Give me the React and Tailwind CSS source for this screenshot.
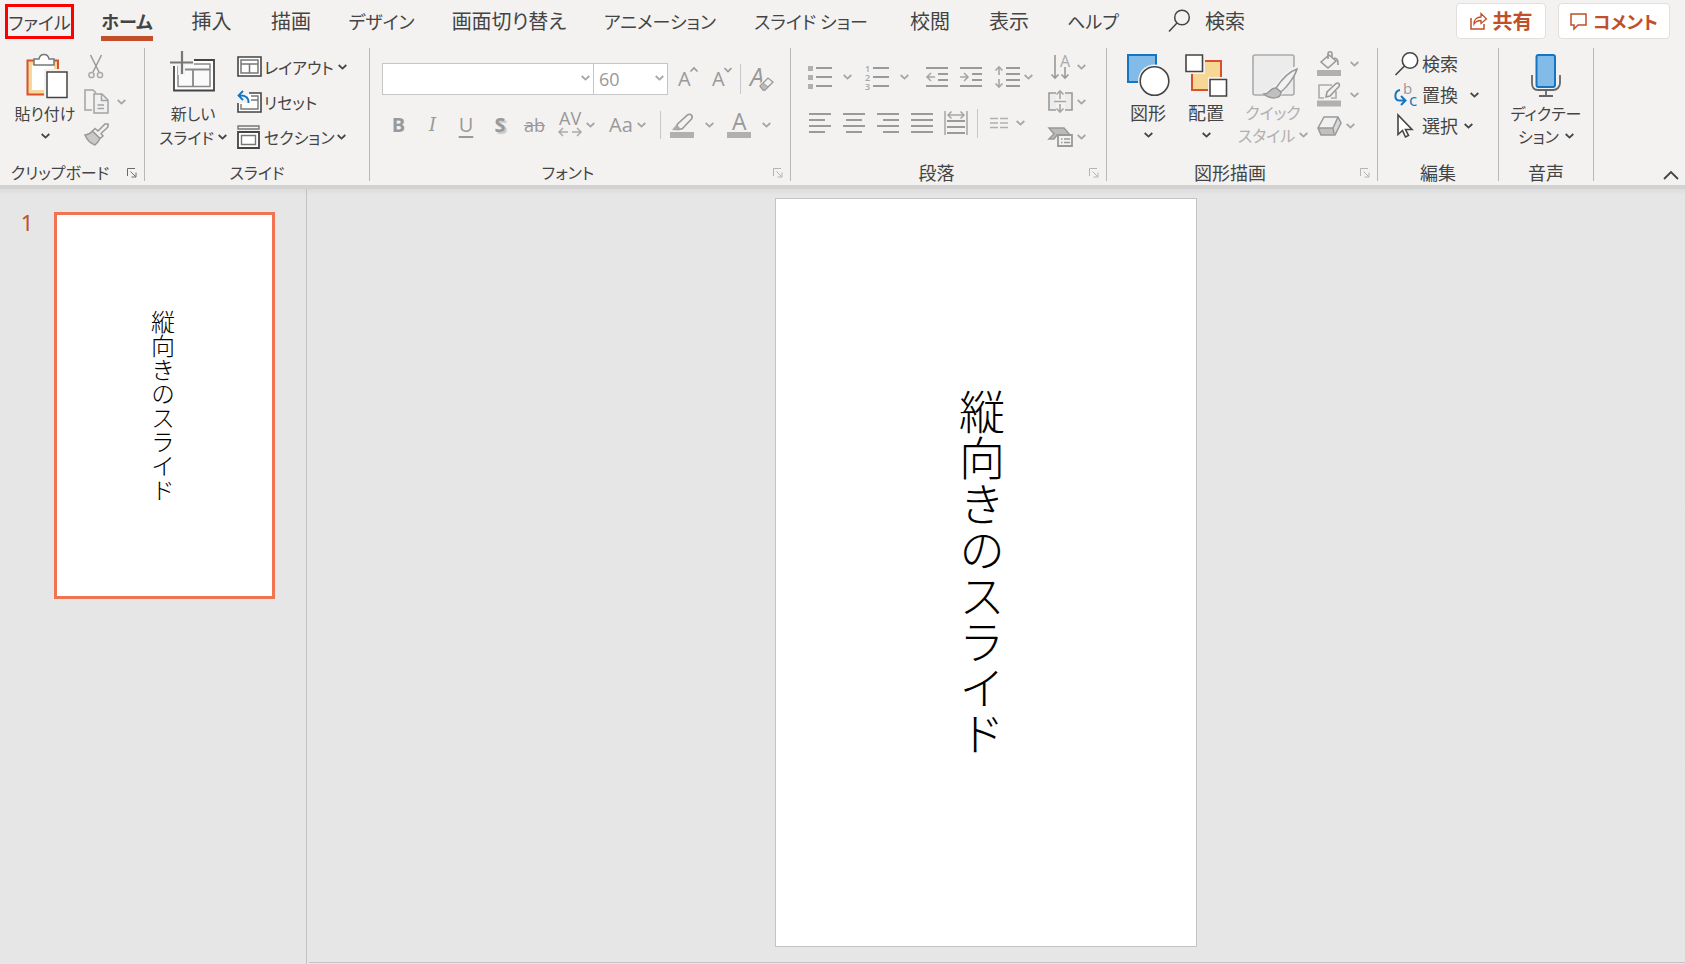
import { useState } from 'react';
import clsx from 'clsx';

const tabs = [
  { name: 'ホーム', width: 'w-[90px]' },
  { name: '挿入', width: 'w-[79px]' },
  { name: '描画', width: 'w-[80px]' },
  { name: 'デザイン', width: 'w-[101px]' },
  { name: '画面切り替え', width: 'w-[154px]' },
  { name: 'アニメーション', width: 'w-[148px]' },
  { name: 'スライド ショー', width: 'w-[154px]' },
  { name: '校閲', width: 'w-[84px]' },
  { name: '表示', width: 'w-[74px]' },
  { name: 'ヘルプ', width: 'w-[94px]' },
];

function Chevron({ dim }) {
  return (
    <svg width="9" height="6" viewBox="0 0 9 6" fill="none" strokeWidth="1.8" className={clsx('shrink-0', dim ? 'stroke-[#a6a6a6]' : 'stroke-[#444444]')}>
      <path d="M.700 1 4.500 4.600 8.300 1" />
    </svg>
  );
}

function Svg({ w, h, children }) {
  return (
    <svg width={w} height={h} viewBox={`0 0 ${w} ${h}`} fill="none" className="shrink-0 overflow-visible">
      {children}
    </svg>
  );
}

function Group({ label, width, launcher, dimLauncher, children }) {
  return (
    <section aria-label={label} className={clsx('flex h-[133px] shrink-0 flex-col border-r border-[#b8b8b8]', width)}>
      <div className="flex flex-1 items-start">{children}</div>
      <div className="flex h-[18px] items-center">
        <span className={clsx('flex-1 text-center leading-[18px]', /^[ァ-ー]+$/.test(label) ? 'text-base' : 'text-lg')}>{label}</span>
        {launcher && (
          <button type="button" aria-label={`${label}の設定`} className="flex w-6 justify-center pt-0.5">
            <svg width="10" height="10" viewBox="0 0 10 10" fill="none" className={dimLauncher ? 'stroke-[#b4b4b4]' : 'stroke-[#6a6a6a]'}>
              <path d="M.5 8V.5H8M3.5 3.5l5 5M9 4.5V9H4.5" />
            </svg>
          </button>
        )}
      </div>
    </section>
  );
}

function Tool({ label, className, children }) {
  return (
    <button type="button" aria-label={label} className={clsx('flex shrink-0 items-center', className)}>
      {children}
    </button>
  );
}

function Lines({ rows }) {
  return (
    <Svg w={22} h={22}>
      {rows.map(([from, to], i) => (
        <path key={i} d={`M${from} ${2 + i * 6}H${to}`} stroke="#9a9a9a" strokeWidth="2" />
      ))}
    </Svg>
  );
}

function ClipboardGroup() {
  return (
    <Group label="クリップボード" width="w-[145px]" launcher>
      <button type="button" className="flex w-[84px] flex-col items-center pt-[5px] pl-1.5 text-base leading-6 whitespace-nowrap">
        <Svg w={44} h={46}>
          <g transform="translate(2 0)">
            <path d="M2.500 7.500H33V41.500H2.500Z" fill="#f8d79a" stroke="#d8512d" strokeWidth="2" />
            <path d="M7 12H29V37H7Z" fill="#fff" />
            <path d="M9 12V6h5c1-6 9-6 10 0h5v6Z" fill="#fff" stroke="#777" strokeWidth="1.500" />
            <path d="M19 16H44V46H19Z" fill="#f3f2f1" />
            <path d="M22 19H42V44.500H22Z" fill="#fff" stroke="#444" strokeWidth="1.500" />
          </g>
        </Svg>
        <span className="mt-0.5">貼り付け</span>
        <span className="flex h-[22px] items-center"><Chevron /></span>
      </button>
      <div className="flex flex-col pt-px">
        <Tool label="切り取り" className="h-[35px] pl-1">
          <Svg w={16} h={24}>
            <path d="M2.500 0 11 17M13.500 0 5 17" stroke="#999" strokeWidth="1.500" />
            <circle cx="3.500" cy="20" r="2.600" stroke="#aaa" strokeWidth="1.500" />
            <circle cx="12" cy="20" r="2.600" stroke="#aaa" strokeWidth="1.500" />
          </Svg>
        </Tool>
        <Tool label="コピー" className="h-[35px] gap-2">
          <Svg w={25} h={25}>
            <path d="M8 21H1V1H9l3 3" stroke="#a3a3a3" strokeWidth="1.500" />
            <path d="M10 5h8l6 6v13H10Z" fill="#f0f0f0" stroke="#a3a3a3" strokeWidth="1.500" />
            <path d="M17.500 5v6.500H24M13.500 16H20M13.500 19.500H20" stroke="#a3a3a3" strokeWidth="1.500" />
          </Svg>
          <Chevron dim />
        </Tool>
        <Tool label="書式のコピー" className="h-[30px]">
          <Svg w={25} h={23}>
            <path d="M1 12C5 12 7 9.500 8.500 8L16 15C15 18 13 20.500 11 22 7 20.500 3 17 1 12Z" fill="#c9c9c9" stroke="#999" strokeWidth="1.500" />
            <path d="M8.500 8 11 5.500l3 2.500L21 1l3 0v3L17 10.500l2 2.500-3 2.500Z" fill="#f0f0f0" stroke="#999" strokeWidth="1.500" />
          </Svg>
        </Tool>
      </div>
    </Group>
  );
}

function SlidesGroup() {
  return (
    <Group label="スライド" width="w-[225px]">
      <button type="button" className="flex w-[92px] flex-col items-center pt-[3px] pl-1 text-base whitespace-nowrap">
        <Svg w={46} h={42}>
          <path d="M4 9H44V39.500H4Z" fill="#fff" stroke="#444" strokeWidth="1.800" />
          <path d="M8 13H40V35.500H8Z" fill="#fafafa" stroke="#888" strokeWidth="1.500" />
          <path d="M8 18.500H40M23 18.500V35.500" stroke="#888" strokeWidth="1.800" />
          <path d="M0 5H24V14H15V24H8V15H0Z" fill="#f3f2f1" />
          <path d="M12 0V23M0 11.500H23" stroke="#777" strokeWidth="2.200" />
        </Svg>
        <span className="mt-2 leading-6">新しい</span>
        <span className="flex items-center gap-1 leading-6">スライド<Chevron /></span>
      </button>
      <div className="flex flex-col pt-px text-base">
        <button type="button" className="flex h-[35px] items-center gap-0.5 whitespace-nowrap">
          <Svg w={25} h={21}>
            <path d="M1 1H24V20H1Z" fill="#fff" stroke="#444" strokeWidth="1.600" />
            <path d="M4 4H21V17H4ZM4 8H21M12.500 8V17" stroke="#777" strokeWidth="1.500" />
          </Svg>
          レイアウト<span className="pl-0.5"><Chevron /></span>
        </button>
        <button type="button" className="flex h-[35px] items-center gap-0.5 whitespace-nowrap">
          <Svg w={25} h={22}>
            <path d="M1 12V21H24V2H12" fill="#fff" stroke="#444" strokeWidth="1.600" />
            <path d="M4 13v5H21V5H14M14 9h7" stroke="#777" strokeWidth="1.400" />
            <path d="M0 0H11V12H0Z" fill="#f3f2f1" />
            <path d="M6 0 1.500 4.500 6 9M2 4.500C9 4 12 7 11.500 12" stroke="#1675c0" strokeWidth="1.800" />
          </Svg>
          リセット
        </button>
        <button type="button" className="flex h-[35px] items-center gap-0.5 whitespace-nowrap">
          <Svg w={25} h={24}>
            <path d="M1 1H22V4H1Z" stroke="#777" strokeWidth="1.400" />
            <path d="M1 7H22V23H1Z" fill="#fff" stroke="#444" strokeWidth="1.800" />
            <path d="M4.500 10.500H18.500V19.500H4.500Z" stroke="#777" strokeWidth="1.400" />
          </Svg>
          セクション<Chevron />
        </button>
      </div>
    </Group>
  );
}

function FontGroup() {
  return (
    <Group label="フォント" width="w-[421px]" launcher dimLauncher>
      <div className="flex flex-col gap-4 pt-[15px] pl-3 font-['Open_Sans','Noto_Sans',sans-serif] text-[#999999]">
        <div className="flex h-8 items-center">
          <label className="relative flex">
            <select aria-label="フォント名" defaultValue="" className="h-8 w-[212px] appearance-none border border-[#c6c6c6] bg-white">
              <option value=""></option>
            </select>
            <span className="pointer-events-none absolute top-3 right-1"><Chevron dim /></span>
          </label>
          <label className="relative -ml-px flex">
            <select aria-label="フォント サイズ" defaultValue="60" className="h-8 w-[75px] appearance-none border border-[#c6c6c6] bg-white pl-[5px] text-lg leading-7">
              <option>60</option>
            </select>
            <span className="pointer-events-none absolute top-3 right-1"><Chevron dim /></span>
          </label>
          <Tool label="フォント サイズの拡大" className="ml-1.5 w-[34px] pl-1">
            <Svg w={20} h={24}>
              <text x="0" y="19" fontSize="20" fill="#999">A</text>
              <path d="M12.500 4.500 16 1 19.500 4.500" stroke="#999" strokeWidth="1.600" />
            </Svg>
          </Tool>
          <Tool label="フォント サイズの縮小" className="w-[32px] pl-1">
            <Svg w={20} h={24}>
              <text x="0" y="19" fontSize="20" fill="#999">A</text>
              <path d="M12.500 1 16 4.500 19.500 1" stroke="#999" strokeWidth="1.600" />
            </Svg>
          </Tool>
          <span className="h-[30px] w-px bg-[#c8c8c8]" />
          <Tool label="書式のクリア" className="pl-[9px]">
            <Svg w={24} h={26}>
              <text x="0" y="20" fontSize="25" fontStyle="italic" fill="#999">A</text>
              <path d="m10 20 7-8h4l3 3-8 9h-4Z" fill="#f3f2f1" stroke="#f3f2f1" strokeWidth="3" />
              <path d="m10 20 8-8 5 4-8 8h-2Z" fill="#f3f2f1" stroke="#999" strokeWidth="1.300" />
              <path d="m10 20 3-3 5 4-3 3h-2Z" fill="#bbb" stroke="#999" />
            </Svg>
          </Tool>
        </div>
        <div className="flex h-7 items-center text-xl leading-7">
          <Tool label="太字" className="w-[33px] justify-center font-bold">B</Tool>
          <Tool label="斜体" className="w-[35px] justify-center font-['DejaVu_Serif','Noto_Sans',serif] text-lg italic">I</Tool>
          <Tool label="下線" className="w-[32px] justify-center underline underline-offset-4">U</Tool>
          <Tool label="文字の影" className="w-[36px] justify-center font-bold [text-shadow:2px_2px_1px_#c8c8c8]">S</Tool>
          <Tool label="取り消し線" className="w-[33px] justify-center text-lg line-through">ab</Tool>
          <Tool label="文字の間隔" className="w-[52px] gap-1 pl-[7px]">
            <Svg w={24} h={26}>
              <text x="1" y="13" fontSize="18" fill="#999">AV</text>
              <path d="M10 20H1M5 16 1 20l4 4M14 20h9M19 16l4 4-4 4" stroke="#aaa" strokeWidth="1.500" />
            </Svg>
            <Chevron dim />
          </Tool>
          <Tool label="文字種の変換" className="w-[57px] gap-1 pl-1.5">Aa<Chevron dim /></Tool>
          <span className="h-[28px] w-px bg-[#c8c8c8]" />
          <Tool label="蛍光ペンの色" className="w-[57px] gap-[10px] pl-[9px]">
            <Svg w={25} h={25}>
              <path d="M7.500 11 17.500 2c3-2 6 1 4 4L12 16H9L7 14Z" stroke="#999" strokeWidth="1.600" />
              <path d="M2 17 6.500 11.500 11 16l-2 1.500Z" fill="#aaa" />
              <path d="M0 19H24V25H0Z" fill="#b0b0b0" />
            </Svg>
            <Chevron dim />
          </Tool>
          <Tool label="フォントの色" className="w-[57px] gap-[10px] pl-[9px]">
            <Svg w={25} h={25}>
              <text x="5" y="17" fontSize="23" fill="#999">A</text>
              <path d="M0 19H24V25H0Z" fill="#b0b0b0" />
            </Svg>
            <Chevron dim />
          </Tool>
        </div>
      </div>
    </Group>
  );
}

function ParagraphGroup() {
  return (
    <Group label="段落" width="w-[316px]" launcher dimLauncher>
      <div className="flex w-[257px] flex-col gap-[14px] pt-[15px] pl-[17px]">
        <div className="flex h-7 items-center">
          <Tool label="箇条書き" className="w-[57px] gap-[11px]">
            <Svg w={24} h={24}>
              <path d="M0 1H5V6H0ZM0 10H5V15H0ZM0 19H5V24H0Z" fill="#b0b0b0" />
              <path d="M8 3H24M8 12H24M8 21H24" stroke="#9a9a9a" strokeWidth="2" />
            </Svg>
            <Chevron dim />
          </Tool>
          <Tool label="段落番号" className="w-[60px] gap-[11px]">
            <Svg w={24} h={24}>
              <g fill="#a6a6a6" fontSize="9" fontWeight="600" fontFamily="Open Sans">
                <text x="0" y="7">1</text>
                <text x="0" y="16">2</text>
                <text x="0" y="25">3</text>
              </g>
              <path d="M8 3H24M8 12H24M8 21H24" stroke="#9a9a9a" strokeWidth="2" />
            </Svg>
            <Chevron dim />
          </Tool>
          <Tool label="インデントを減らす" className="w-[34px]">
            <Svg w={24} h={24}>
              <path d="M1 3H23M13 9H23M13 15H23M1 21H23" stroke="#9a9a9a" strokeWidth="2" />
              <path d="M10 12H2M6 8 2 12l4 4" stroke="#a6a6a6" strokeWidth="1.600" />
            </Svg>
          </Tool>
          <Tool label="インデントを増やす" className="w-[36px]">
            <Svg w={24} h={24}>
              <path d="M1 3H23M13 9H23M13 15H23M1 21H23" stroke="#9a9a9a" strokeWidth="2" />
              <path d="M1 12H9M5 8l4 4-4 4" stroke="#a6a6a6" strokeWidth="1.600" />
            </Svg>
          </Tool>
          <Tool label="行間" className="gap-1">
            <Svg w={25} h={24}>
              <path d="M11 3H25M11 9H25M11 15H25M11 21H25" stroke="#9a9a9a" strokeWidth="2" />
              <path d="M4 10V2M.500 5.500 4 2l3.500 3.500M4 14v8M.500 18.500 4 22l3.500-3.500" stroke="#a6a6a6" strokeWidth="1.600" />
            </Svg>
            <Chevron dim />
          </Tool>
        </div>
        <div className="flex h-9 items-center">
          <Tool label="左揃え" className="w-[35px] pl-px"><Lines rows={[[0, 22], [0, 16], [0, 22], [0, 16]]} /></Tool>
          <Tool label="中央揃え" className="w-[34px]"><Lines rows={[[0, 22], [3, 19], [0, 22], [3, 19]]} /></Tool>
          <Tool label="右揃え" className="w-[34px]"><Lines rows={[[0, 22], [6, 22], [0, 22], [6, 22]]} /></Tool>
          <Tool label="両端揃え" className="w-[33px]"><Lines rows={[[0, 22], [0, 22], [0, 22], [0, 22]]} /></Tool>
          <Tool label="均等割り付け" className="w-[33px]">
            <Svg w={24} h={24}>
              <path d="M1 0V24M23 0V24" stroke="#a6a6a6" strokeWidth="1.500" />
              <path d="M3 10H21M3 16H21M3 22H21" stroke="#9a9a9a" strokeWidth="2" />
              <path d="M4 4H20M7.500.500 4 4l3.500 3.500M16.500.500 20 4l-3.500 3.500" stroke="#a6a6a6" strokeWidth="1.500" />
            </Svg>
          </Tool>
          <span className="h-[29px] w-px bg-[#c8c8c8]" />
          <Tool label="段組み" className="gap-[7px] pl-3">
            <Svg w={19} h={12}>
              <path d="M0 1.500H8M0 6H8M0 10.500H8M10 1.500H18M10 6H18M10 10.500H18" stroke="#b0b0b0" strokeWidth="1.500" />
            </Svg>
            <Chevron dim />
          </Tool>
        </div>
      </div>
      <div className="flex flex-col pt-px">
        <Tool label="文字列の方向" className="h-[35px] gap-1">
          <Svg w={25} h={24}>
            <path d="M7 0V23M3.500 19.500 7 23l3.500-3.500M17 12V23M13.500 19.500 17 23l3.500-3.500" stroke="#999" strokeWidth="1.600" />
            <text x="12" y="12" fontSize="16" fill="#aaa" fontFamily="Open Sans">A</text>
          </Svg>
          <Chevron dim />
        </Tool>
        <Tool label="文字の配置" className="h-[35px] gap-1">
          <Svg w={25} h={23}>
            <path d="M8 3H1V20H8M17 3H24V20H17" fill="#ececec" stroke="#999" strokeWidth="1.600" />
            <path d="M6 11.500H18M12 9V1M8.500 4.500 12 1l3.500 3.500M12 14v8M8.500 18.500 12 22l3.500-3.500" stroke="#a6a6a6" strokeWidth="1.600" />
          </Svg>
          <Chevron dim />
        </Tool>
        <Tool label="SmartArt に変換" className="h-[35px] gap-1">
          <Svg w={25} h={20}>
            <path d="M1 1H16L22 8H9L6 12H1L6 7Z" fill="#bbb" stroke="#999" strokeWidth="1.500" />
            <path d="M10 8H24V19H10Z" fill="#f3f2f1" stroke="#999" strokeWidth="1.800" />
            <path d="M13 12h1.500M13 15.500h1.500M16 12h6M16 15.500h6" stroke="#999" strokeWidth="1.400" />
          </Svg>
          <Chevron dim />
        </Tool>
      </div>
    </Group>
  );
}

function DrawingGroup() {
  return (
    <Group label="図形描画" width="w-[271px]" launcher dimLauncher>
      <button type="button" className="flex w-[70px] flex-col items-center pt-[6px] pl-3 text-lg leading-6">
        <Svg w={43} h={43}>
          <path d="M1 1H29V28H1Z" fill="#83bbe8" stroke="#1675c0" strokeWidth="2" />
          <circle cx="27.500" cy="27" r="16.500" fill="#f3f2f1" />
          <circle cx="27.500" cy="27" r="14.300" fill="#fff" stroke="#444" strokeWidth="1.600" />
        </Svg>
        <span className="mt-[3px]">図形</span>
        <span className="flex h-[21px] items-center"><Chevron /></span>
      </button>
      <button type="button" className="flex w-[58px] flex-col items-center pt-[6px] text-lg leading-6">
        <Svg w={43} h={43}>
          <path d="M7 7H36V36H7Z" fill="#f6d795" stroke="#d8512d" strokeWidth="2" />
          <path d="M0 0H20V20H0ZM23 23H43V43H23Z" fill="#f3f2f1" />
          <path d="M1 1H17.500V17.500H1ZM25 25.500H41.500V42H25Z" fill="#fff" stroke="#444" strokeWidth="1.600" />
        </Svg>
        <span className="mt-[3px]">配置</span>
        <span className="flex h-[21px] items-center"><Chevron /></span>
      </button>
      <button type="button" className="flex w-[76px] flex-col items-center pt-[6px] text-base text-[#b0b0b0]">
        <Svg w={46} h={45}>
          <g transform="translate(2 0)">
            <path d="M1 3c0-1 1-2 2-2H40c1 0 2 1 2 2V39c0 1-1 2-2 2H3c-1 0-2-1-2-2Z" fill="#ececec" stroke="#aaa" strokeWidth="1.600" />
            <path d="M46 11 30 41 12 45 14 36 22 32 36 16Z" fill="#f3f2f1" />
            <path d="M45 15C36 18 28 28 24 34l5 4C36 32 43 22 45 15Z" fill="#f3f2f1" stroke="#999" strokeWidth="1.600" />
            <path d="M12 40c6 0 5-6 12-6l5 4c0 8-12 7-17 2Z" fill="#c0c0c0" stroke="#999" strokeWidth="1.500" />
          </g>
        </Svg>
        <span className="mt-px leading-6">クイック</span>
        <span className="flex items-center gap-1 leading-[22px] whitespace-nowrap">スタイル<Chevron dim /></span>
      </button>
      <div className="flex flex-col pl-1.5">
        <Tool label="図形の塗りつぶし" className="h-[31px] gap-2">
          <Svg w={25} h={25}>
            <path d="m4 11 8-7 7 6-8 7Z" fill="#f3f2f1" stroke="#999" strokeWidth="1.600" />
            <path d="M11 8V3c0-3 4-3 4 0v3M17 7c4 0 4 3 4 7" stroke="#999" strokeWidth="1.600" />
            <path d="M0 19H24V25H0Z" fill="#b0b0b0" />
          </Svg>
          <Chevron dim />
        </Tool>
        <Tool label="図形の枠線" className="h-[31px] gap-2">
          <Svg w={25} h={25}>
            <path d="M15 3H2V16H7M19 9v7h-5" stroke="#aaa" strokeWidth="1.600" />
            <path d="m9 15 1-5L19 1.500c2-1.500 4.500 1 3 3L13 14Z" fill="#f3f2f1" stroke="#999" strokeWidth="1.600" />
            <path d="M0 18.500H24V24.500H0Z" fill="#b0b0b0" />
          </Svg>
          <Chevron dim />
        </Tool>
        <Tool label="図形の効果" className="h-[31px] gap-1">
          <Svg w={25} h={20}>
            <path d="M7 1H21L16 12H1Z" fill="#f0f0f0" />
            <path d="M1 12H16v7H4Z" fill="#c0c0c0" />
            <path d="M16 12 21 1l3 6-6 12h-2Z" fill="#d8d8d8" />
            <path d="M7 1H21l3 6-6 12H4L1 12ZM1 12H16L21 1M16 12l1 6" stroke="#999" strokeWidth="1.500" />
          </Svg>
          <Chevron dim />
        </Tool>
      </div>
    </Group>
  );
}

function EditingGroup() {
  return (
    <Group label="編集" width="w-[121px]">
      <div className="flex flex-col pl-4 text-lg leading-6">
        <button type="button" className="flex h-[31px] items-center gap-1">
          <Svg w={24} h={24}>
            <circle cx="16" cy="8.500" r="7.700" fill="#fff" stroke="#444" strokeWidth="1.600" />
            <path d="M10.500 14 1.500 23" stroke="#444" strokeWidth="1.600" />
          </Svg>
          <span className="pb-0.5">検索</span>
        </button>
        <button type="button" className="flex h-[31px] items-center gap-1">
          <Svg w={24} h={25}>
            <g fontFamily="Open Sans">
              <text x="9" y="12" fontSize="15" fill="#999">b</text>
              <text x="15" y="24" fontSize="17" fill="#1675c0">c</text>
            </g>
            <path d="M6 8C0 9 0 18 5 18.500h6M7 14l4.500 4.500L7 23" stroke="#1675c0" strokeWidth="2" />
          </Svg>
          <span className="pb-0.5">置換</span>
          <span className="pl-2"><Chevron /></span>
        </button>
        <button type="button" className="flex h-[31px] items-center gap-1">
          <Svg w={24} h={24}>
            <path d="M4 1V20.500l4.500-4 3 6.500 3-1.500-3-6H18Z" fill="#fff" stroke="#444" strokeWidth="1.600" />
          </Svg>
          <span className="pb-0.5">選択</span>
          <span className="pl-0.5"><Chevron /></span>
        </button>
      </div>
    </Group>
  );
}

function VoiceGroup() {
  return (
    <Group label="音声" width="w-[95px]">
      <button type="button" className="flex w-full flex-col items-center pt-[6px] text-base whitespace-nowrap">
        <Svg w={30} h={43}>
          <path d="M1 21V29c0 4 2 7 6 7H22c4 0 7-3 7-7V21M15 36v5M8 42H22" stroke="#666" strokeWidth="1.800" />
          <rect x="5.500" y="1" width="18.500" height="32" rx="2" fill="#83bbe8" stroke="#1675c0" strokeWidth="2" />
        </Svg>
        <span className="mt-1 leading-6">ディクテー</span>
        <span className="flex items-center gap-1.5 leading-[22px]">ション<Chevron /></span>
      </button>
    </Group>
  );
}

function App() {
  const [active, setActive] = useState('ホーム');

  return (
    <div className="flex h-screen flex-col overflow-hidden bg-[#e6e6e6] font-['Noto_Sans_CJK_JP',sans-serif] text-[#444444] [font-feature-settings:'palt']">
      <header className="shrink-0 border-b-4 border-[#d2d2d2] bg-[#f3f2f1] pb-1">
        <nav className="flex h-12 items-start text-xl leading-7">
          <button type="button" className="mt-1 mr-2 ml-[5px] flex h-[35px] w-[69px] shrink-0 items-center justify-center border-3 border-[#ff0000] text-lg whitespace-nowrap">ファイル</button>
          {tabs.map((tab) => (
            <button
              key={tab.name}
              type="button"
              onClick={() => setActive(tab.name)}
              className={clsx('flex h-[41px] shrink-0 justify-center pt-[7px] whitespace-nowrap', tab.width, /[ァ-ー]/.test(tab.name) && 'text-lg leading-7')}
            >
              <span className={clsx(active === tab.name && 'border-b-5 border-[#c14f29] font-bold')}>{tab.name}</span>
            </button>
          ))}
          <button type="button" className="ml-7 flex h-[41px] shrink-0 items-center gap-[15px]">
            <Svg w={22} h={24}>
              <circle cx="14" cy="8.500" r="7.300" stroke="#444" strokeWidth="1.500" />
              <path d="M9 14 1 22.500" stroke="#444" strokeWidth="1.500" />
            </Svg>
            検索
          </button>
          <div className="mt-[3px] mr-[15px] ml-auto flex gap-3 font-bold text-[#c14f29]">
            <button type="button" className="flex h-9 w-[90px] items-center justify-center gap-1.5 rounded border border-[#e1dfdd] bg-white">
              <Svg w={17} h={18}>
                <path d="M1 6V17H14V12" stroke="#c14f29" strokeWidth="1.500" />
                <path d="M4 12C4 7 7 5 11 5V1.500L16.500 7 11 11.500V8.500C8 8.500 6 9 4 12Z" stroke="#c14f29" strokeWidth="1.300" />
              </Svg>
              共有
            </button>
            <button type="button" className="flex h-9 w-[112px] items-center justify-center gap-1.5 rounded border border-[#e1dfdd] bg-white text-lg">
              <Svg w={17} h={17}>
                <path d="M1 1H16V12H8L4 16V12H1Z" stroke="#c14f29" strokeWidth="1.500" />
              </Svg>
              コメント
            </button>
          </div>
        </nav>
        <div className="flex">
          <ClipboardGroup />
          <SlidesGroup />
          <FontGroup />
          <ParagraphGroup />
          <DrawingGroup />
          <EditingGroup />
          <VoiceGroup />
          <button type="button" aria-label="リボンを折りたたむ" className="mr-[6px] mb-px ml-auto self-end">
            <Svg w={16} h={10}>
              <path d="M1 9 8 2l7 7" stroke="#444" strokeWidth="1.800" />
            </Svg>
          </button>
        </div>
      </header>

      <div className="flex min-h-0 flex-1 bg-linear-to-b from-[#dcdcdc] to-[#e6e6e6] to-[6px]">
        <aside className="flex w-[307px] shrink-0 items-start border-r border-[#c3c3c3] pt-[23px]">
          <span className="w-[54px] text-center font-['Noto_Sans',sans-serif] text-[22px] leading-5 text-[#c14f29]">1</span>
          <button type="button" aria-label="スライド 1" className="flex h-[387px] w-[221px] items-center justify-center border-3 border-[#f07352] bg-white pr-1 text-2xl font-light text-black">
            <span className="[writing-mode:vertical-rl]">縦向きのスライド</span>
          </button>
        </aside>
        <main className="mb-px ml-[2px] flex flex-1 justify-center border-b border-[#c3c3c3] pt-[9px] pr-[22px] pb-[15px]">
          <article className="flex aspect-[422/749] items-center justify-center border border-[#c3c3c3] bg-white">
            <h1 className="pr-2 text-[46px] leading-[48px] font-light text-black [writing-mode:vertical-rl]">縦向きのスライド</h1>
          </article>
        </main>
      </div>
    </div>
  );
}

export default App;
